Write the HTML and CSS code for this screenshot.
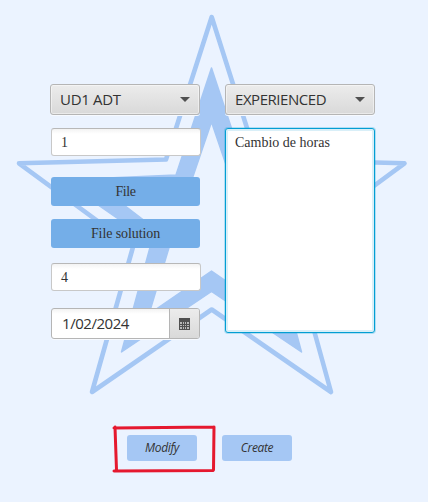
FILE: index.html
```
<!DOCTYPE html>
<html lang="es">
<head>
<meta charset="utf-8">
<title>UD1 ADT</title>
<link rel="stylesheet" href="styles.css">
</head>
<body>
<main class="screen">
  <svg class="star" viewBox="0 0 428 502" aria-hidden="true">
    <path class="star-outline" d="M211.7 17 166 159.500 19 163.300 133 247 92 392 211.700 309.500 331 392 291 247 404.500 163.300 257 159.500Z"/>
    <path class="star-body" fill-rule="evenodd" d="M211.500 68 176 175 62 180 151.500 242 121.500 352 211.500 291.500 301.500 352 272 242 361 180 247 175ZM211.500 122 188 191 107 192 171 241 149 314 211.500 271 274 314 252 241 316 192 235 191Z"/>
  </svg>
  <form class="form">
    <div class="column">
      <div class="combo"><span class="combo-a">UD1 ADT</span><i class="arrow"></i></div>
      <div class="field field-first">1</div>
      <button class="file file-first" type="button">File</button>
      <button class="file file-second" type="button">File solution</button>
      <div class="field field-second">4</div>
      <div class="date">
        <span class="date-text">1/02/2024</span>
        <span class="date-button">
          <svg class="calendar" viewBox="0 0 11 12" aria-hidden="true">
            <path fill="#505050" d="M0 0h11v12H0z"/>
            <path fill="#b8b8b8" d="M1 4h2v2H1zM4 4h1v2H4zM6 4h1v2H6zM8 4h2v2H8zM1 7h2v1H1zM4 7h1v1H4zM6 7h1v1H6zM8 7h2v1H8zM1 9h2v2H1zM4 9h1v2H4zM6 9h1v2H6zM8 9h2v2H8z"/>
          </svg>
        </span>
      </div>
    </div>
    <div class="column">
      <div class="combo"><span class="combo-b">EXPERIENCED</span><i class="arrow"></i></div>
      <div class="area">Cambio de horas</div>
    </div>
  </form>
  <div class="actions">
    <button class="action" type="button">Modify</button>
    <button class="action" type="button">Create</button>
  </div>
  <svg class="marker" viewBox="0 0 104 50" aria-hidden="true">
    <path d="M2 4 102 3M102 3 101.500 46M3 3 4.500 46M2 47 101 46.500"/>
  </svg>
</main>
</body>
</html>
```
FILE: styles.css
```
* { box-sizing: border-box; }
body { margin: 0; background: #ebf3ff; color: #333; }
.screen {
  position: relative;
  width: 428px;
  height: 502px;
  padding-top: 84px;
  overflow: hidden;
}
.star { position: absolute; left: 0; top: 0; width: 428px; height: 502px; }
.star-outline { fill: none; stroke: #a5c7f4; stroke-width: 4.6; stroke-linejoin: round; }
.star-body { fill: #a5c7f4; stroke: #a5c7f4; stroke-width: 1.5; stroke-linejoin: round; }
.form { position: relative; display: flex; gap: 25px; padding-left: 50px; height: 351px; }
.column { width: 150px; display: flex; flex-direction: column; }
.combo {
  height: 31px;
  display: flex;
  align-items: center;
  justify-content: space-between;
  padding: 0 9px;
  border: 1px solid #b5b5b5;
  border-radius: 3px;
  background: linear-gradient(#ececec, #d9d9d9);
  box-shadow: inset 0 0 0 1px rgba(255, 255, 255, .45), 0 1px 0 #f7faff;
  font: 15px/20px "Open Sans", "Noto Sans", sans-serif;
}
.combo span { padding-bottom: 2px; }
.combo-a { letter-spacing: -.3px; }
.combo-b { letter-spacing: -.45px; }
.arrow { border: 5px solid transparent; border-top-color: #505050; border-bottom: 0; }
.field {
  width: 150px;
  height: 28px;
  margin-left: 1px;
  padding: 0 9px;
  border: 1px solid #c8c8c8;
  border-top-color: #b8b8b8;
  border-radius: 3px;
  background: linear-gradient(#f3f3f3, #fff 5px);
  font: 14px/28px "Liberation Serif", serif;
}
.field-first { margin-top: 13px; }
.field-second { margin-top: 15px; }
.file {
  width: 149px;
  height: 29px;
  margin-left: 1px;
  padding: 0;
  border: 0;
  border-radius: 3px;
  background: #74aee8;
  color: #333;
  font: 14px/29px "Liberation Serif", serif;
}
.file-first { margin-top: 21px; letter-spacing: -.4px; }
.file-second { margin-top: 13px; letter-spacing: -.1px; }
.date {
  width: 149px;
  height: 31px;
  margin: 17px 0 0 1px;
  display: flex;
  border: 1px solid #b5b5b5;
  border-radius: 3px;
  background: linear-gradient(#f3f3f3, #fff 5px);
  box-shadow: 0 1px 0 #f7faff;
  overflow: hidden;
}
.date-text { flex: 1; padding-left: 10px; font: 15px/29px "Open Sans", "Noto Sans", sans-serif; letter-spacing: -.45px; }
.date-button {
  width: 30px;
  display: flex;
  align-items: center;
  justify-content: center;
  border-left: 1px solid #b5b5b5;
  background: linear-gradient(#ececec, #d9d9d9);
}
.calendar { width: 11px; height: 12px; }
.area {
  height: 205px;
  margin-top: 13px;
  padding: 5px 9px;
  border: 1px solid #039ed3;
  border-radius: 3px;
  background: #fff;
  box-shadow: inset 0 0 0 2px #d9eff8, 0 0 0 1px rgba(3, 158, 211, .25);
  font: 14px/17px "Liberation Serif", serif;
}
.actions { position: relative; display: flex; gap: 25px; padding-left: 127px; }
.action {
  width: 70px;
  height: 26px;
  padding: 0;
  border: 0;
  border-radius: 3px;
  background: #a5c7f4;
  color: #333;
  font: italic 12px/26px "Open Sans", "Noto Sans", sans-serif;
  letter-spacing: -.35px;
}
.marker {
  position: absolute;
  left: 112px;
  top: 424px;
  width: 104px;
  height: 50px;
  fill: none;
  stroke: #e5182f;
  stroke-width: 3;
  stroke-linecap: round;
}
```
